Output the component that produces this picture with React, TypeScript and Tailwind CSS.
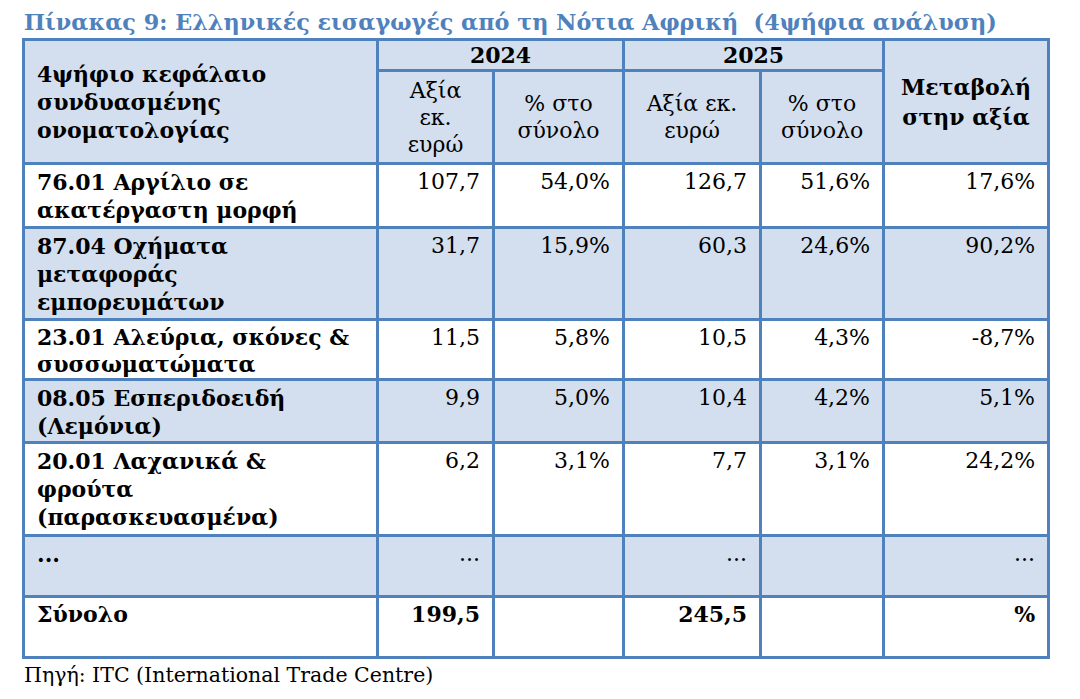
const rows = [
  { name: ["76.01 Αργίλιο σε", "ακατέργαστη μορφή"], v24: "107,7", p24: "54,0%", v25: "126,7", p25: "51,6%", ch: "17,6%", h: "h-[64px]", shaded: false, tight: false },
  { name: ["87.04 Οχήματα", "μεταφοράς", "εμπορευμάτων"], v24: "31,7", p24: "15,9%", v25: "60,3", p25: "24,6%", ch: "90,2%", h: "h-[92px]", shaded: true, tight: false },
  { name: ["23.01 Αλεύρια, σκόνες &", "συσσωματώματα"], v24: "11,5", p24: "5,8%", v25: "10,5", p25: "4,3%", ch: "-8,7%", h: "h-[60px]", shaded: false, tight: true },
  { name: ["08.05 Εσπεριδοειδή", "(Λεμόνια)"], v24: "9,9", p24: "5,0%", v25: "10,4", p25: "4,2%", ch: "5,1%", h: "h-[63px]", shaded: true, tight: false },
  { name: ["20.01 Λαχανικά &", "φρούτα", "(παρασκευασμένα)"], v24: "6,2", p24: "3,1%", v25: "7,7", p25: "3,1%", ch: "24,2%", h: "h-[93px]", shaded: false, tight: false },
  { name: ["..."], v24: "...", p24: "", v25: "...", p25: "", ch: "...", h: "h-[61px]", shaded: true, tight: false },
];

const cell = "border-[3px] border-[#4f81bd] align-top px-[12px] pt-[3px]";

export default function App() {
  return (
    <div className="min-h-screen bg-white font-['DejaVu_Serif',serif] text-black">
      <div className="pl-[24px] pt-[6px] text-[22.3px] leading-[32px] font-bold text-[#4f81bd] whitespace-pre">
        Πίνακας 9: Ελληνικές εισαγωγές από τη Νότια Αφρική  (4ψήφια ανάλυση)
      </div>

      <table className="ml-[22px] w-[1028px] table-fixed border-collapse text-[22px] leading-[27px]">
        <colgroup>
          <col className="w-[354px]" />
          <col className="w-[116px]" />
          <col className="w-[130px]" />
          <col className="w-[137px]" />
          <col className="w-[123px]" />
          <col className="w-[165px]" />
        </colgroup>
        <thead className="bg-[#d3dfee]">
          <tr className="h-[31px]">
            <th rowSpan={2} className="border-[3px] border-[#4f81bd] px-[12px] text-left align-middle font-bold leading-[28px] whitespace-nowrap">
              4ψήφιο κεφάλαιο
              <br />
              συνδυασμένης
              <br />
              ονοματολογίας
            </th>
            <th colSpan={2} className="border-[3px] border-[#4f81bd] text-center align-middle font-bold leading-[26px]">
              2024
            </th>
            <th colSpan={2} className="border-[3px] border-[#4f81bd] text-center align-middle font-bold leading-[26px]">
              2025
            </th>
            <th rowSpan={2} className="border-[3px] border-[#4f81bd] px-[6px] text-center align-middle font-bold leading-[30px] whitespace-nowrap">
              Μεταβολή
              <br />
              στην αξία
            </th>
          </tr>
          <tr className="h-[93px]">
            <th className="border-[3px] border-[#4f81bd] text-center align-middle font-normal">
              Αξία
              <br />
              εκ.
              <br />
              ευρώ
            </th>
            <th className="border-[3px] border-[#4f81bd] text-center align-middle font-normal whitespace-nowrap">
              % στο
              <br />
              σύνολο
            </th>
            <th className="border-[3px] border-[#4f81bd] text-center align-middle font-normal whitespace-nowrap">
              Αξία εκ.
              <br />
              ευρώ
            </th>
            <th className="border-[3px] border-[#4f81bd] text-center align-middle font-normal whitespace-nowrap">
              % στο
              <br />
              σύνολο
            </th>
          </tr>
        </thead>
        <tbody>
          {rows.map((r) => (
            <tr key={r.name[0]} className={`${r.h} ${r.shaded ? "bg-[#d3dfee]" : "bg-white"}`}>
              <td className={`${cell} text-left font-bold whitespace-nowrap ${r.tight ? "leading-[27px]" : "leading-[28px]"}`}>
                {r.name.map((line, i) => (
                  <div key={i}>{line}</div>
                ))}
              </td>
              <td className={`${cell} text-right`}>{r.v24}</td>
              <td className={`${cell} text-right`}>{r.p24}</td>
              <td className={`${cell} text-right`}>{r.v25}</td>
              <td className={`${cell} text-right`}>{r.p25}</td>
              <td className={`${cell} text-right`}>{r.ch}</td>
            </tr>
          ))}
          <tr className="h-[61px] bg-white">
            <td className={`${cell} text-left font-bold`}>Σύνολο</td>
            <td className={`${cell} text-right font-bold`}>199,5</td>
            <td className={cell}></td>
            <td className={`${cell} text-right font-bold`}>245,5</td>
            <td className={cell}></td>
            <td className={`${cell} text-right font-bold`}>%</td>
          </tr>
        </tbody>
      </table>

      <div className="pl-[24px] pt-[2px] text-[20.5px] leading-[28px]">
        Πηγή: ITC (International Trade Centre)
      </div>
    </div>
  );
}
